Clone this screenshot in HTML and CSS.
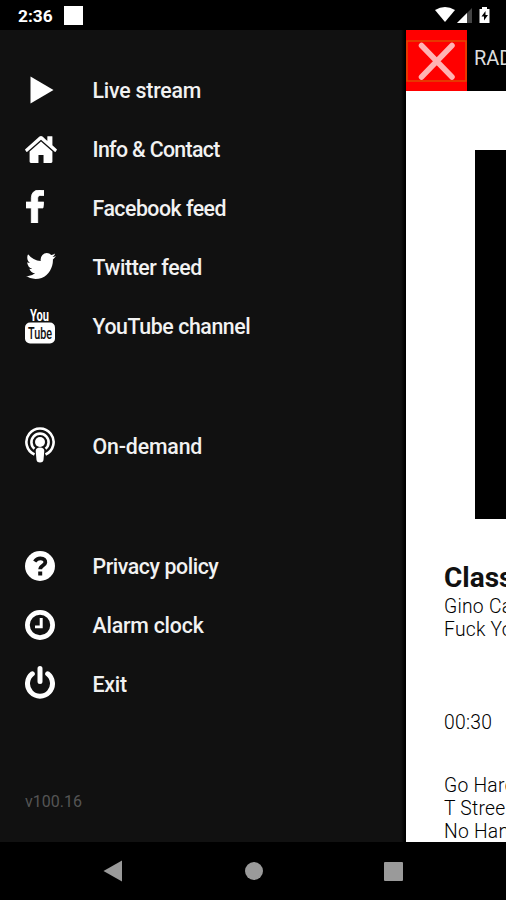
FILE: index.html
```html
<!DOCTYPE html>
<html lang="en">
<head>
<meta charset="utf-8">
<title>Radio</title>
<link rel="stylesheet" href="styles.css">
</head>
<body>
<header class="status">
  <span class="time">2:36</span><span class="notice"></span>
  <svg class="signals" width="58" height="20" viewBox="0 0 58 20">
    <path fill="#fff" d="M0 5Q10 -1 20 5L10 17z"/>
    <path fill="#444" d="M37 3V18H22z"/><path fill="#fff" d="M32 8V18H22z"/>
    <path fill="#fff" d="M47 2h5v2h2.500v14H44.500V4H47z"/><path fill="#000" d="M50.500 6l-4 5.500h2.500v4l4-5.500h-2.500z"/>
  </svg>
</header>
<main class="screen">
  <nav class="drawer">
    <ul class="group">
      <li><span class="icon"><svg class="play" width="24" height="28" viewBox="0 0 24 28"><path d="M0.500 0.500L23.500 14L0.500 27.500z"/></svg></span><span class="label live">Live stream</span></li>
      <li><span class="icon"><svg class="home" width="32" height="27" viewBox="88 250 1616 1288" preserveAspectRatio="none"><path d="M1472 992v480q0 26-19 45t-45 19h-384v-384h-256v384h-384q-26 0-45-19t-19-45v-480q0-1 .5-3t.5-3l575-474 575 474q1 2 1 6zm223-69l-62 74q-8 9-21 11h-3q-13 0-21-7l-692-577-692 577q-12 8-24 7-13-2-21-11l-62-74q-8-10-7-23.5t11-21.5l719-599q32-26 76-26t76 26l244 204v-195q0-14 9-23t23-9h192q14 0 23 9t9 23v408l219 182q10 8 11 21.5t-7 23.5z"/></svg></span><span class="label info">Info &amp; Contact</span></li>
      <li><span class="icon"><svg class="facebook" width="18" height="33" viewBox="479 0 864 1664" preserveAspectRatio="none"><path stroke="#fff" stroke-width="40" d="M1343 12v264h-157q-86 0-116 36t-30 108v189h293l-39 296h-254v759h-306v-759h-255v-296h255v-218q0-186 104-288.5t277-102.5q147 0 228 12z"/></svg></span><span class="label face">Facebook feed</span></li>
      <li><span class="icon"><svg class="twitter" width="30" height="26" viewBox="108 256 1576 1280" preserveAspectRatio="none"><path d="M1684 408q-67 98-162 167 1 14 1 42 0 130-38 259.5t-115.5 248.5-184.500 210.500-258 146-323 54.500q-271 0-496-145 35 4 78 4 225 0 401-138-105-2-188-64.500t-114-159.500q33 5 61 5 43 0 85-11-112-23-185.500-111.500t-73.500-205.500v-4q68 38 146 41-66-44-105-115t-39-154q0-88 44-163 121 149 294.500 238.500t371.500 99.500q-8-38-8-74 0-134 94.500-228.500t228.500-94.500q140 0 236 102 109-21 205-78-37 115-142 178 93-10 186-50z"/></svg></span><span class="label twit">Twitter feed</span></li>
      <li><span class="icon"><svg class="youtube" width="30" height="37" viewBox="0 0 30 37"><text x="5" y="13.500" textLength="19" lengthAdjust="spacingAndGlyphs">You</text><rect y="15.500" width="30" height="21" rx="5"/><text class="tube" x="3" y="32" textLength="24" lengthAdjust="spacingAndGlyphs">Tube</text></svg></span><span class="label you">YouTube channel</span></li>
    </ul>
    <ul class="group">
      <li><span class="icon"><svg class="podcast" width="30" height="36" viewBox="0 0 30 36"><g fill="none" stroke="#fff" stroke-width="2.600"><path d="M9.500 27.500A13.600 13.600 0 1 1 20.500 27.500"/><path d="M9.500 21.800A8.600 8.600 0 1 1 20.500 21.800"/></g><circle cx="15" cy="15" r="5"/><path d="M10.700 24q0-3.500 4.300-3.500t4.300 3.500l-.8 9q-.5 2.500-3.500 2.500t-3.500-2.500z"/></svg></span><span class="label demand">On-demand</span></li>
    </ul>
    <ul class="group">
      <li><span class="icon"><svg class="question" width="30" height="30" viewBox="0 0 30 30"><circle cx="15" cy="15" r="15"/><path fill="none" stroke="#111" stroke-width="3.800" d="M9.700 10.500Q12 7.200 15.500 7.300C19 7.400 20.500 9.300 20.300 11.500C20 14.500 15.200 14.600 15.200 18.300"/><path fill="#111" d="M13.200 20.500h4v4h-4z"/></svg></span><span class="label privacy">Privacy policy</span></li>
      <li><span class="icon"><svg class="clock" width="30" height="30" viewBox="0 0 30 30"><circle cx="15" cy="15" r="12.600" fill="none" stroke="#fff" stroke-width="4.800"/><path d="M14.700 8h3v10.300H10v-2.800h4.700z"/></svg></span><span class="label alarm">Alarm clock</span></li>
      <li><span class="icon"><svg class="power" width="30" height="33" viewBox="0 0 30 33"><path fill="none" stroke="#fff" stroke-width="5" stroke-linecap="round" d="M7.300 7.800A12.500 12.500 0 1 0 22.700 7.800M15 2.500V15.500"/></svg></span><span class="label exit">Exit</span></li>
    </ul>
    <p class="version">v100.16</p>
  </nav>
  <section class="page">
    <header class="bar">
      <div class="close"><svg width="61" height="42" viewBox="0 0 61 42"><rect x="1" y="1" width="59" height="40" fill="none" stroke="#e04a00" stroke-width="1.500"/><path d="M15.500 5.500L46 37M46 5.500L15.500 37" fill="none" stroke="#ffb3b3" stroke-width="5.500" stroke-linecap="round"/></svg></div>
      <span class="station">RAD</span>
    </header>
    <div class="cover"></div>
    <h1>Class</h1>
    <p class="track">Gino Ca<br>Fuck Yo</p>
    <p class="elapsed">00:30</p>
    <p class="next">Go Hard<br>T Stree<br>No Han</p>
  </section>
</main>
<footer class="navbar">
  <svg width="20" height="22" viewBox="0 0 20 22"><path d="M19 .5V21.500L.5 11z"/></svg>
  <svg width="18" height="18" viewBox="0 0 18 18"><circle cx="9" cy="9" r="9"/></svg>
  <svg width="19" height="19" viewBox="0 0 19 19"><rect width="19" height="19" rx="1"/></svg>
</footer>
</body>
</html>
```
FILE: styles.css
```css
* { box-sizing: border-box; margin: 0; padding: 0; }
body { width: 506px; height: 900px; overflow: hidden; background: #000; font-family: Roboto, "Liberation Sans", sans-serif; display: flex; flex-direction: column; }
svg { display: block; flex: none; }
.status { height: 30px; display: flex; align-items: center; padding: 0 13px 0 18px; color: #fff; }
.time { font-size: 17.3px; font-weight: 700; width: 46px; line-height: 30px; padding-top: 2px; }
.notice { width: 19px; height: 19px; background: #fff; }
.signals { margin-left: auto; }
.screen { height: 812px; display: flex; align-items: flex-start; }
.drawer { width: 406px; height: 812px; flex: none; padding: 31px 0 0 25px; background: linear-gradient(90deg, #111 401px, #000 405px); }
.group { list-style: none; margin-bottom: 61px; }
.group li { height: 59px; display: flex; align-items: center; }
.icon { width: 67.5px; flex: none; fill: #fff; }
.play { margin-left: 5px; margin-top: -1px; }
.home { margin-top: -1px; }
.facebook { margin-left: 1px; margin-top: -4px; }
.twitter { margin-left: 1px; margin-top: -3px; }
.youtube { font-size: 17px; font-weight: 700; margin-top: -3px; }
.youtube .tube { fill: #111; font-weight: 500; }
.podcast { margin-top: -3px; }
.question, .clock { margin-top: -2px; }
.power { margin-top: -5px; }
.label { color: #f2f2f2; font-size: 21.3px; font-weight: 500; line-height: 26px; white-space: nowrap; }
.live, .alarm { letter-spacing: -.2px; }
.info { letter-spacing: -.65px; }
.face { letter-spacing: -.5px; }
.twit, .you { letter-spacing: -.4px; }
.demand { letter-spacing: -.15px; }
.privacy { letter-spacing: -.42px; }
.exit { letter-spacing: -.2px; }
.version { color: #555; font-size: 16px; line-height: 20px; margin-top: 78px; }
.page { width: 100px; height: 812px; background: #fff; overflow: hidden; color: #000; white-space: nowrap; font-size: 19.3px; font-weight: 300; line-height: 23px; letter-spacing: .25px; }
.bar { height: 61px; background: #000; display: flex; align-items: center; color: #ddd; }
.close { width: 61px; height: 61px; flex: none; background: #f00; display: flex; align-items: center; }
.station { padding-left: 7px; font-size: 20px; font-weight: 400; letter-spacing: 0; margin-top: -4px; }
.cover { height: 369px; margin: 59px 0 0 69px; background: #000; }
h1 { margin: 42px 0 1px 38px; font-size: 28px; line-height: 33px; font-weight: 700; letter-spacing: 0; color: #111; }
.track, .elapsed, .next { padding-left: 38px; }
.elapsed { margin-top: 70px; }
.next { margin-top: 40px; }
.navbar { height: 58px; display: flex; align-items: center; padding-left: 103px; fill: #9a9a9a; gap: 121.5px; }
```
